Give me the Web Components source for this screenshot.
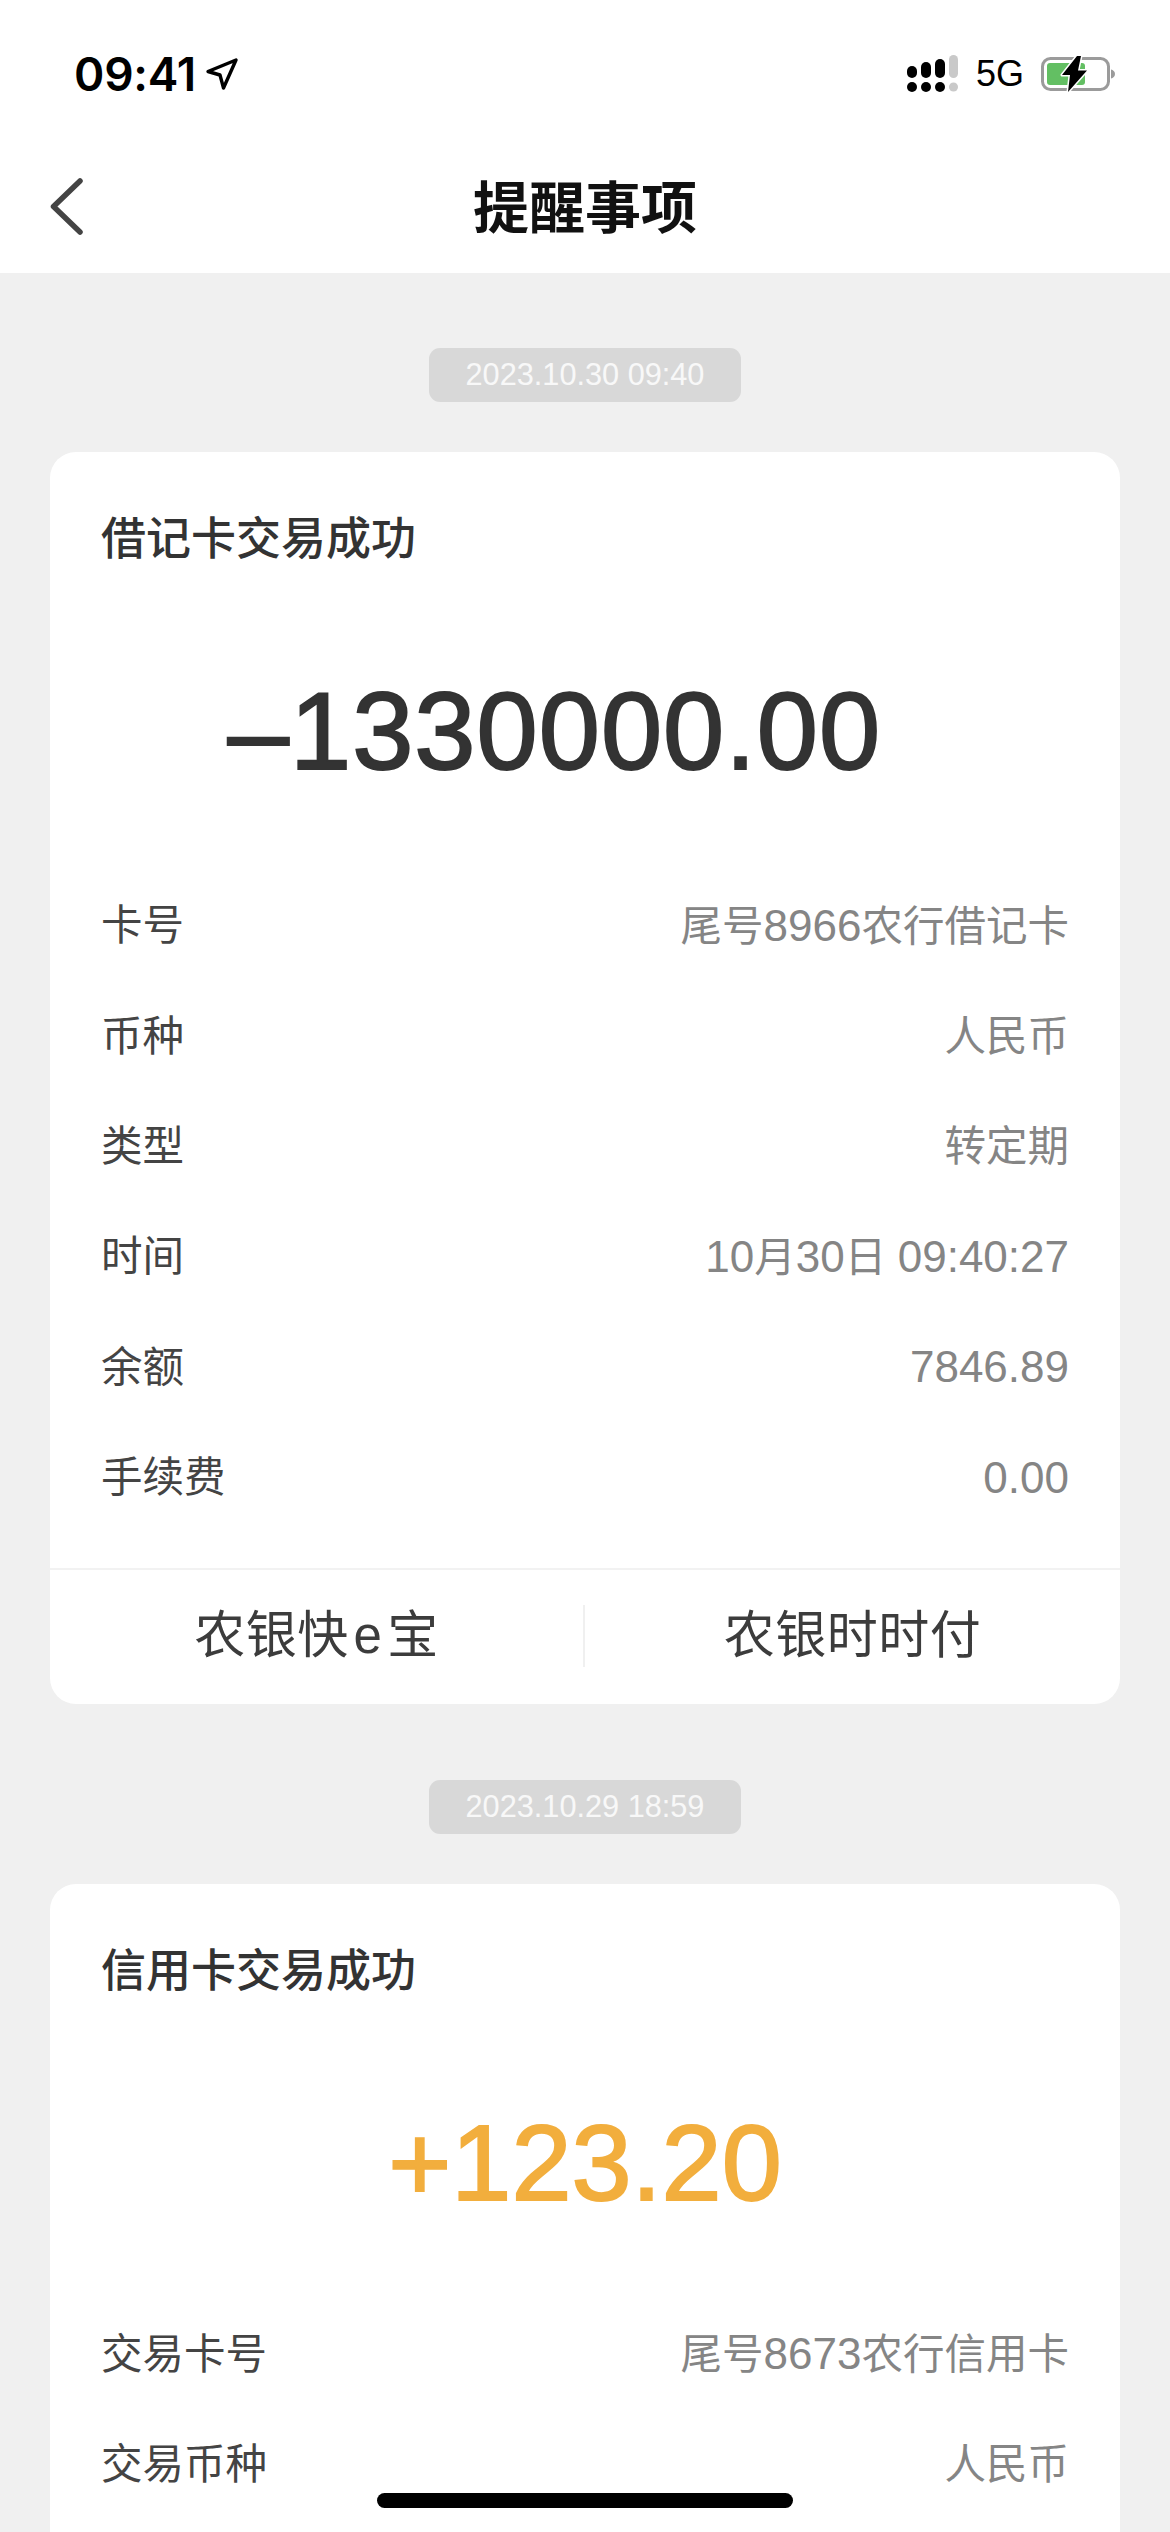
<!DOCTYPE html>
<html lang="zh">
<head>
<meta charset="utf-8">
<title>提醒事项</title>
<style>
  html, body { margin: 0; height: 2532px; overflow: hidden; background: #f0f0f0; }
  body { font-family: "Liberation Sans", "Noto Sans CJK SC", sans-serif; }
  notice-card + time-chip { margin-top: 76px; }
  .big-amount { --amount-size: 110px; --amount-track: 1px; --amount-trim: 61px; }
</style>
</head>
<body>
  <status-bar></status-bar>
  <nav-bar>提醒事项</nav-bar>
  <time-chip>2023.10.30 09:40</time-chip>
  <notice-card class="big-amount" heading="借记卡交易成功" amount="–1330000.00">
    <info-row label="卡号">尾号<span class="num">8966</span>农行借记卡</info-row>
    <info-row label="币种">人民币</info-row>
    <info-row label="类型">转定期</info-row>
    <info-row label="时间"><span class="num">10</span>月<span class="num">30</span>日 <span class="num">09:40:27</span></info-row>
    <info-row label="余额"><span class="num">7846.89</span></info-row>
    <info-row label="手续费"><span class="num">0.00</span></info-row>
    <action-bar slot="actions">
      <span>农银快&#8202;e&#8202;宝</span>
      <span>农银时时付</span>
    </action-bar>
  </notice-card>
  <time-chip>2023.10.29 18:59</time-chip>
  <notice-card heading="信用卡交易成功" amount="+123.20" tone="income">
    <info-row label="交易卡号">尾号<span class="num">8673</span>农行信用卡</info-row>
    <info-row label="交易币种">人民币</info-row>
  </notice-card>
  <home-indicator></home-indicator>

<script>
class StatusBar extends HTMLElement {
  constructor() {
    super();
    this.attachShadow({ mode: "open" }).innerHTML = `
      <style>
        :host { display: flex; justify-content: space-between; align-items: center; height: 146px; box-sizing: border-box; padding: 2px 55px 0 74px; background: #fff; color: #000; }
        .left, .right { display: flex; align-items: center; }
        .time { font: 600 46px/50px Inter, "Liberation Sans", sans-serif; letter-spacing: -0.2px; }
        .arrow { margin-left: 9px; }
        .net { font: 36px/40px "Liberation Sans", sans-serif; margin: 0 15px 0 17px; }
        svg { display: block; }
      </style>
      <div class="left">
        <span class="time">09:41</span>
        <svg class="arrow" width="34" height="34" viewBox="0 0 34 34"><path d="M3 14.500 31 3 18.500 31 15 18Z" fill="none" stroke="#000" stroke-width="3.400" stroke-linejoin="round"/></svg>
      </div>
      <div class="right">
        <svg width="52" height="38" viewBox="0 0 52 38">
          <g fill="#000">
            <rect x="0" y="11" width="10" height="12" rx="5"/><rect x="14" y="7" width="10" height="16" rx="5"/><rect x="28" y="4" width="10" height="19" rx="5"/>
            <circle cx="5" cy="32" r="5"/><circle cx="19" cy="32" r="5"/><circle cx="33" cy="32" r="5"/>
          </g>
          <g fill="#c9c9c9"><rect x="42" y="0" width="9" height="23" rx="4.500"/><circle cx="46.500" cy="32" r="4.500"/></g>
        </svg>
        <span class="net">5G</span>
        <svg width="76" height="38" viewBox="0 0 76 38">
          <rect x="3.500" y="3.500" width="66" height="31" rx="8" fill="none" stroke="#9b9b9b" stroke-width="3"/>
          <path d="M72 14.500c2 .5 4 2 4 4.500s-2 4-4 4.500z" fill="#9b9b9b"/>
          <rect x="8" y="8" width="38" height="22" rx="3" fill="#63bf63"/>
          <path d="M38 1 23 20h8L29 37 48 15.500h-9L42 1z" fill="#000" stroke="#fff" stroke-width="3" stroke-linejoin="round" paint-order="stroke"/>
        </svg>
      </div>`;
  }
}

class NavBar extends HTMLElement {
  constructor() {
    super();
    this.attachShadow({ mode: "open" }).innerHTML = `
      <style>
        :host { display: flex; align-items: center; justify-content: center; position: relative; height: 127px; background: #fff; }
        .back { position: absolute; left: 48px; top: 31px; display: block; }
        .title { font: 600 56px/70px "Noto Sans CJK SC", sans-serif; color: #111; margin-bottom: 12px; }
      </style>
      <svg class="back" width="40" height="60" viewBox="0 0 40 60"><path d="M32 4 5.500 29.500 32 55" fill="none" stroke="#444" stroke-width="5.500" stroke-linecap="round" stroke-linejoin="round"/></svg>
      <div class="title"><slot></slot></div>`;
  }
}

class TimeChip extends HTMLElement {
  constructor() {
    super();
    this.attachShadow({ mode: "open" }).innerHTML = `
      <style>
        :host { display: flex; width: 312px; height: 54px; margin: 75px auto 50px; align-items: center; justify-content: center; background: #d8d8d8; border-radius: 11px; color: #f8f8f8; font: 30.700px/54px "Liberation Sans", sans-serif; }
      </style>
      <slot></slot>`;
  }
}

const cardTemplate = document.createElement("template");
cardTemplate.innerHTML = `
  <style>
    :host { display: block; margin: 0 50px; background: #fff; border-radius: 26px; overflow: hidden; color: #333; }
    .heading { font: 500 45px/60px "Noto Sans CJK SC", sans-serif; padding: 54px 51px 3px; }
    .amount { font: var(--amount-size, 108px)/130px "Liberation Sans", sans-serif; letter-spacing: var(--amount-track, 0); -webkit-text-stroke: 2px currentColor; text-align: center; padding: 97px var(--amount-trim, 0px) 75px 0; }
    :host([tone="income"]) .amount { color: #f2ae3d; padding-bottom: 71px; }
    .rows { padding: 0 51px; }
    :host([tone="income"]) .rows { padding-bottom: 60px; }
    ::slotted(action-bar) { margin-top: 35px; }
  </style>
  <div class="heading"></div>
  <div class="amount"></div>
  <div class="rows"><slot></slot></div>
  <slot name="actions"></slot>
`;

class NoticeCard extends HTMLElement {
  constructor() {
    super();
    this.attachShadow({ mode: "open" }).appendChild(cardTemplate.content.cloneNode(true));
    this.shadowRoot.querySelector(".heading").textContent = this.getAttribute("heading");
    this.shadowRoot.querySelector(".amount").textContent = this.getAttribute("amount");
  }
}

class InfoRow extends HTMLElement {
  constructor() {
    super();
    this.attachShadow({ mode: "open" }).innerHTML = `
      <style>
        :host { display: flex; justify-content: space-between; align-items: center; height: 110.400px; font: 41.500px/50px "Liberation Sans", "Noto Sans CJK SC", sans-serif; color: #858585; }
        .label { color: #444; }
        ::slotted(.num) { font-size: 44px; }
      </style>
      <span class="label"></span>
      <span><slot></slot></span>`;
    this.shadowRoot.querySelector(".label").textContent = this.getAttribute("label");
  }
}

class ActionBar extends HTMLElement {
  constructor() {
    super();
    this.attachShadow({ mode: "open" }).innerHTML = `
      <style>
        :host { display: grid; grid-template-columns: 1fr 1fr; align-items: center; height: 134px; border-top: 2px solid #f2f2f2; font: 51px/62px "Liberation Sans", "Noto Sans CJK SC", sans-serif; letter-spacing: 0.500px; color: #3c3c3c; text-align: center; }
        ::slotted(span) { margin-bottom: 3px; }
        ::slotted(span:first-child) { border-right: 2px solid #f0f0f0; }
      </style>
      <slot></slot>`;
  }
}

class HomeIndicator extends HTMLElement {
  constructor() {
    super();
    this.attachShadow({ mode: "open" }).innerHTML = `
      <style>
        :host { position: fixed; left: 377px; top: 2493px; width: 416px; height: 15px; background: #000; border-radius: 8px; }
      </style>`;
  }
}

customElements.define("status-bar", StatusBar);
customElements.define("nav-bar", NavBar);
customElements.define("time-chip", TimeChip);
customElements.define("notice-card", NoticeCard);
customElements.define("info-row", InfoRow);
customElements.define("action-bar", ActionBar);
customElements.define("home-indicator", HomeIndicator);
</script>
</body>
</html>
